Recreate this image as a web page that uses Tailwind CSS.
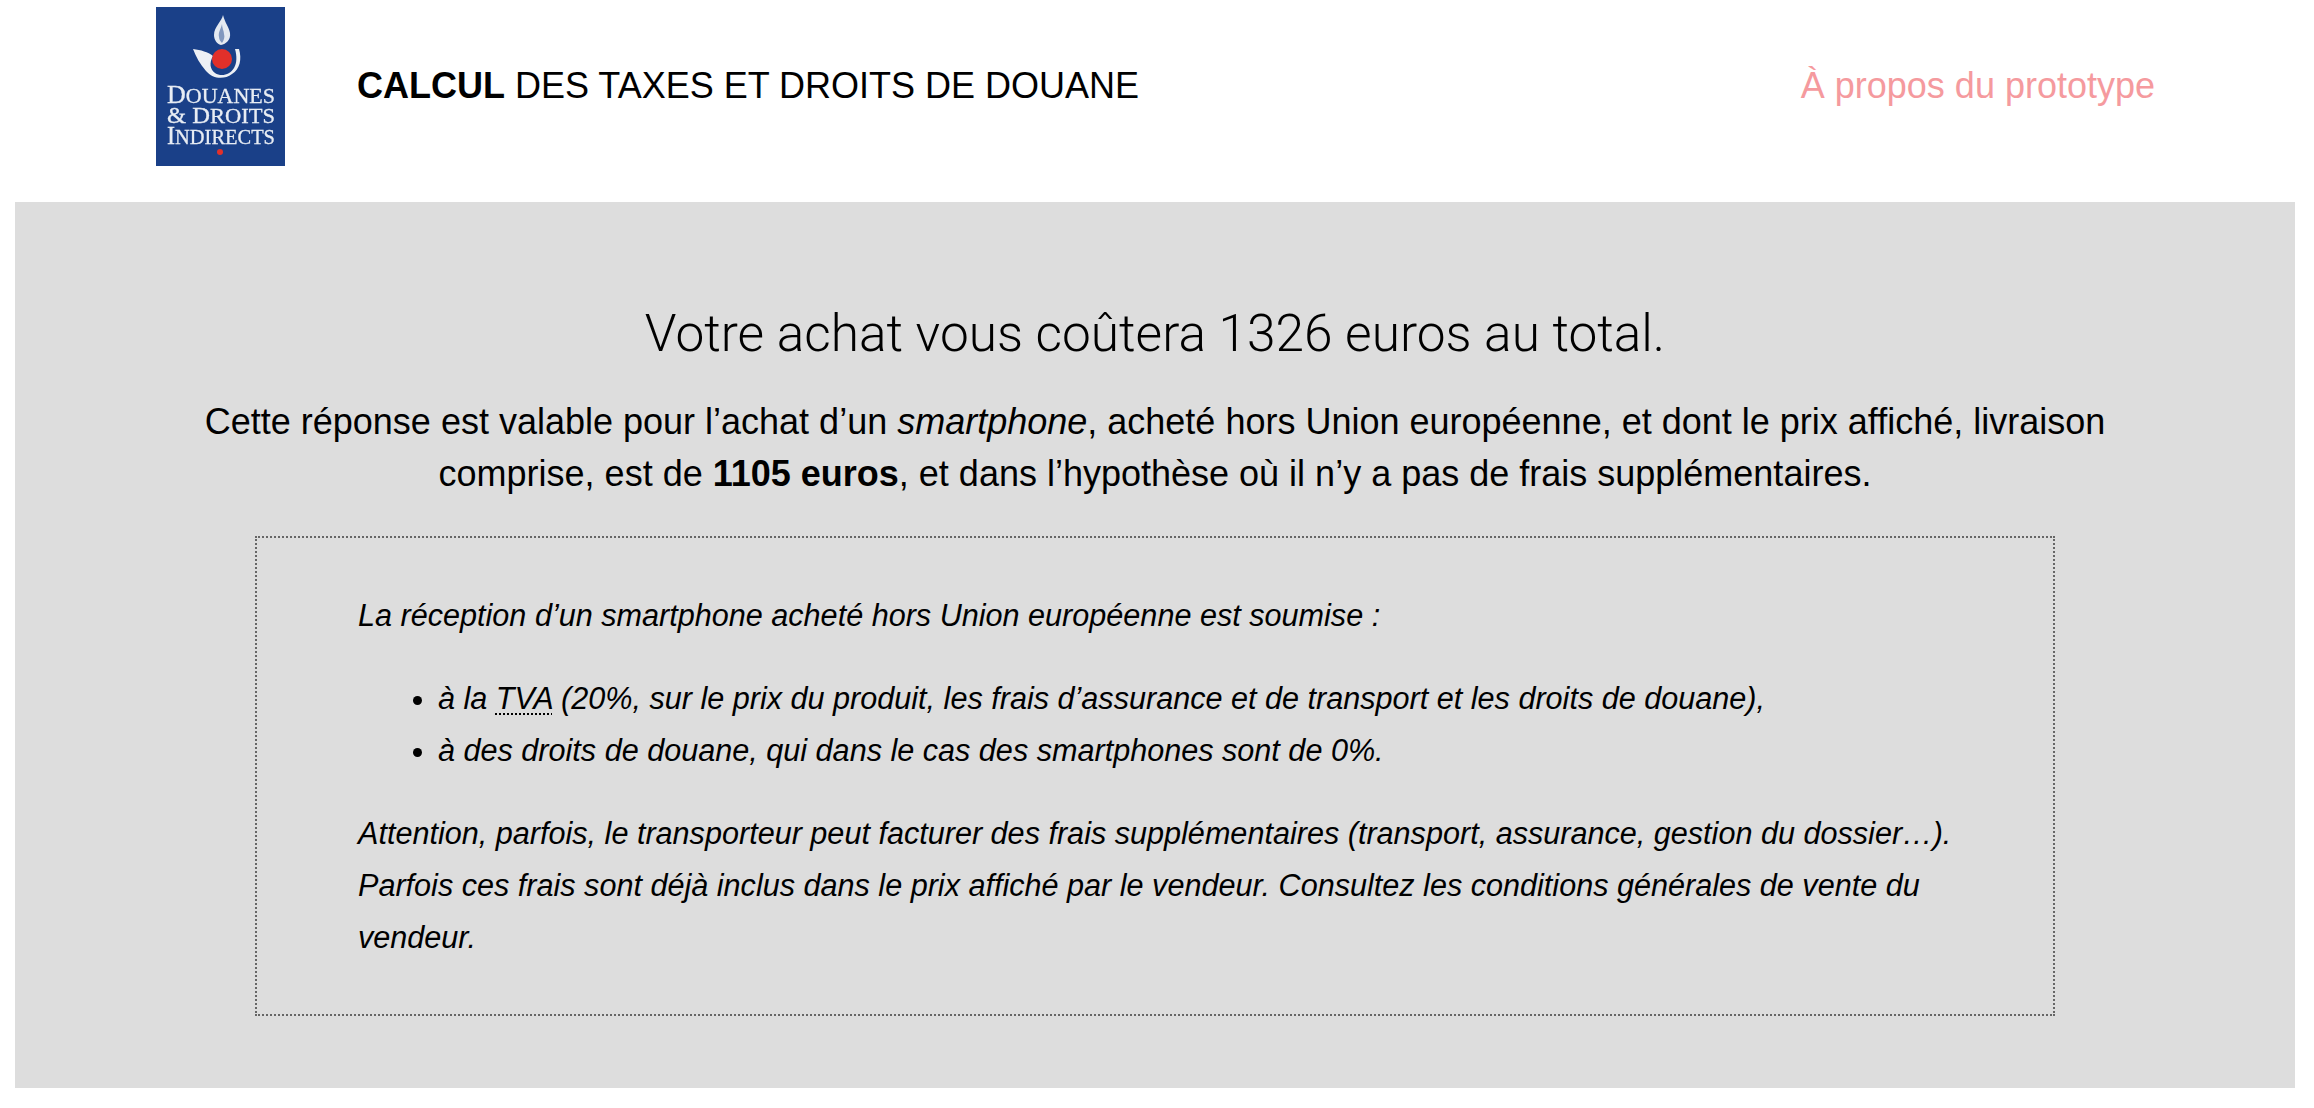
<!DOCTYPE html>
<html lang="fr">
<head>
  <meta charset="UTF-8">
  <meta name="viewport" content="width=device-width, initial-scale=1.0">
  <title>Calcul des taxes et droits de douane</title>
  <script src="https://cdn.jsdelivr.net/npm/@tailwindcss/browser@4"></script>
</head>
<body class="bg-white text-black font-['Liberation_Sans',Arial,sans-serif] overflow-hidden">
  <!-- Header -->
  <header class="h-[202px] flex items-start pl-[156px] pr-[159px]">
    <svg class="w-[129px] h-[159px] mt-[7px] shrink-0 blur-[0.5px]" viewBox="0 0 129 159" role="img" aria-label="Douanes et droits indirects">
      <rect width="129" height="159" fill="#1a4088"/>
      <path d="M67 8C66 14 58 20 58 28C58 33 61 37 65 38C70 37 75 33 74 26C73 20 69 16 67 8z" fill="#e4e9f1"/>
      <path d="M66 17C65 22 62 25 63 30C63 33 65 35 66 36C68 33 69 30 68 27C68 24 66 21 66 17z" fill="#8298bf"/>
      <path d="M37 42C45 43 52 45 57 49C53 56 54 62 59 66C65 70 74 68 78 61C81 56 81 49 79 42L83 42C86 52 84 62 76 67C68 73 57 72 50 64C44 57 40 50 37 42z" fill="#edf0f5"/>
      <circle cx="66" cy="52" r="10" fill="#e2302a"/>
      <g fill="#e8edf4" stroke="#e8edf4" stroke-width=".3" font-family="'Liberation Serif',serif" font-size="22">
        <text x="11" y="96" textLength="108" lengthAdjust="spacingAndGlyphs"><tspan font-size="26">D</tspan>OUANES</text>
        <text x="11" y="116" textLength="108" lengthAdjust="spacingAndGlyphs"><tspan font-size="24">&amp; D</tspan>ROITS</text>
        <text x="11" y="137" textLength="108" lengthAdjust="spacingAndGlyphs"><tspan font-size="26">I</tspan>NDIRECTS</text>
      </g>
      <circle cx="64" cy="145" r="3" fill="#e2302a"/>
    </svg>
    <h1 class="ml-[72px] mt-[65px] text-[36px] leading-[42px] font-normal whitespace-nowrap"><strong class="font-bold">CALCUL</strong> DES TAXES ET DROITS DE DOUANE</h1>
    <a href="#" class="ml-auto mt-[65px] text-[36px] leading-[42px] text-[#f59a9e] whitespace-nowrap">À propos du prototype</a>
  </header>

  <!-- Result panel -->
  <main class="mx-[15px] w-[2280px] h-[886px] bg-[#dddddd] pt-[95px] text-center">
    <h2 class="text-[51.4px] leading-[74px] font-['Roboto',sans-serif] font-light">Votre achat vous coûtera 1326 euros au total.</h2>
    <p class="mt-[25px] mx-auto w-[1960px] text-[36px] leading-[52px]">Cette réponse est valable pour l’achat d’un <em>smartphone</em>, acheté hors Union européenne, et dont le prix affiché, livraison comprise, est de <strong>1105 euros</strong>, et dans l’hypothèse où il n’y a pas de frais supplémentaires.</p>

    <section class="mt-[36px] ml-[240px] w-[1800px] h-[480px] border-2 border-dotted border-[#666666] pt-[51px] pl-[101px] pr-[90px] text-left italic text-[30.6px] leading-[52px]">
      <p>La réception d’un smartphone acheté hors Union européenne est soumise :</p>
      <ul class="list-disc pl-[80px] mt-[31px]">
        <li>à la <abbr class="underline decoration-dotted decoration-2 underline-offset-[4px]" title="Taxe sur la valeur ajoutée">TVA</abbr> (20%, sur le prix du produit, les frais d’assurance et de transport et les droits de douane),</li>
        <li>à des droits de douane, qui dans le cas des smartphones sont de 0%.</li>
      </ul>
      <p class="mt-[31px]">Attention, parfois, le transporteur peut facturer des frais supplémentaires (transport, assurance, gestion du dossier…). Parfois ces frais sont déjà inclus dans le prix affiché par le vendeur. Consultez les conditions générales de vente du vendeur.</p>
    </section>
  </main>
</body>
</html>
